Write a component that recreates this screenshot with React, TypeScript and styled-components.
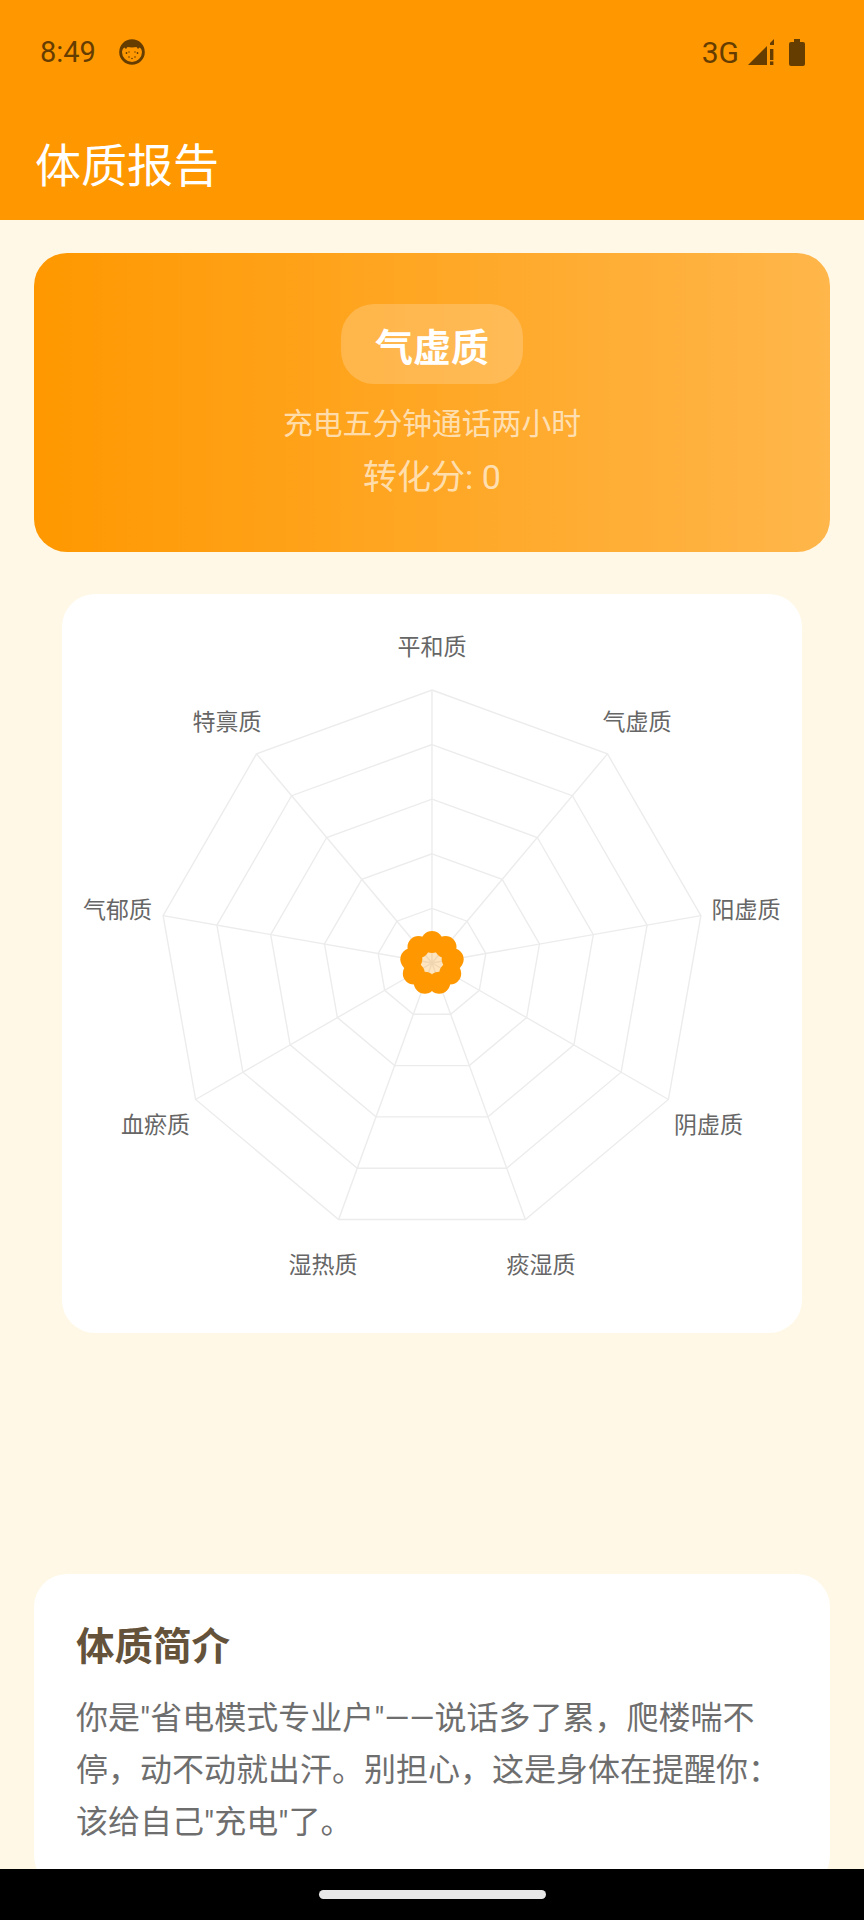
import React from 'react';
import styled, { createGlobalStyle } from 'styled-components';

const GlobalStyle = createGlobalStyle`
  html, body {
    margin: 0;
    padding: 0;
    background: #fff8e7;
    font-family: Roboto, "Noto Sans CJK SC", sans-serif;
  }
`

const Screen = styled.div`
  width: 864px;
  height: 1920px;
  display: flex;
  flex-direction: column;
  overflow: hidden;
  background: #fff8e7;
`

const Header = styled.header`
  flex: none;
  height: 220px;
  box-sizing: border-box;
  background: #ff9800;
  display: flex;
  flex-direction: column;
`

const StatusBar = styled.div`
  height: 104px;
  box-sizing: border-box;
  padding: 0 59px 0 40px;
  display: flex;
  align-items: center;
  justify-content: space-between;
  color: #663d00;
`

const StatusGroup = styled.div`
  display: flex;
  align-items: center;
`

const Clock = styled.span`
  font-size: 29px;
  width: 79px;
`

const Network = styled.span`
  font-size: 30px;
  font-weight: 400;
  margin-right: 9px;
`

const Battery = styled.svg`
  margin-left: 15px;
`

const Title = styled.h1`
  margin: 31px 0 0;
  padding-left: 35px;
  font-size: 46px;
  line-height: 62px;
  font-weight: 400;
  color: #fff;
`

const Content = styled.main`
  flex: 1;
  min-height: 0;
  overflow: hidden;
  padding: 33px 34px 0;
  display: flex;
  flex-direction: column;
`

const Hero = styled.section`
  flex: none;
  height: 299px;
  box-sizing: border-box;
  padding-top: 51px;
  border-radius: 33px;
  background: linear-gradient(90deg, #ff9800, #ffb64a);
  display: flex;
  flex-direction: column;
  align-items: center;
`

const Badge = styled.div`
  width: 182px;
  height: 80px;
  border-radius: 33px;
  background: rgba(255, 255, 255, 0.2);
  display: flex;
  align-items: center;
  justify-content: center;
  color: #fff;
  font-size: 38px;
  font-weight: 700;
`

const Slogan = styled.div`
  margin-top: 20px;
  font-size: 29.8px;
  line-height: 40px;
  color: rgba(255, 255, 255, 0.65);
`

const Score = styled.div`
  margin-top: 10px;
  font-size: 34px;
  line-height: 46px;
  color: rgba(255, 255, 255, 0.65);
`

const ChartCard = styled.section`
  flex: none;
  width: 740px;
  height: 739px;
  margin: 42px 0 0 28px;
  border-radius: 33px;
  background: #fff;
`

const ChartLabel = styled.text`
  font-size: 23px;
  fill: #666;
  text-anchor: middle;
  dominant-baseline: central;
`

const IntroCard = styled.section`
  flex: none;
  margin-top: 241px;
  padding: 47px 46px 40px 42px;
  border-radius: 33px;
  background: #fff;
`

const IntroTitle = styled.h2`
  margin: 0 0 19px;
  font-size: 38.5px;
  line-height: 52px;
  font-weight: 700;
  color: #64523a;
`

const IntroText = styled.p`
  margin: 0;
  font-size: 32px;
  line-height: 52.2px;
  color: #6e6e6e;
`

const NavBar = styled.div`
  flex: none;
  height: 51px;
  background: #000;
  display: flex;
  justify-content: center;
  padding-top: 21px;
  box-sizing: border-box;
`

const NavPill = styled.div`
  width: 227px;
  height: 9px;
  border-radius: 5px;
  background: #e8e8e8;
`

// chart centre inside the card
const CX = 370;
const CY = 369;
const RADIUS = 273;
const DATA_RADIUS = 21;

const labels = [
  { text: '平和质', x: 370, y: 53 },
  { text: '气虚质', x: 575, y: 128 },
  { text: '阳虚质', x: 684, y: 316 },
  { text: '阴虚质', x: 646.5, y: 531 },
  { text: '痰湿质', x: 479, y: 671 },
  { text: '湿热质', x: 261, y: 671 },
  { text: '血瘀质', x: 93.5, y: 531 },
  { text: '气郁质', x: 55.5, y: 316 },
  { text: '特禀质', x: 165, y: 128 },
];

const vertex = (i: number, r: number) => {
  const a = (i * 2 * Math.PI) / 9;
  return [CX + r * Math.sin(a), CY - r * Math.cos(a)];
};

const ring = (r: number) =>
  labels.map((_, i) => vertex(i, r).map(n => n.toFixed(1)).join(',')).join(' ');

const RadarChart = () => (
  <svg width="740" height="739" viewBox="0 0 740 739">
    {[0.2, 0.4, 0.6, 0.8, 1].map(f => (
      <polygon key={f} points={ring(RADIUS * f)} fill="none" stroke="#ececec" strokeWidth="1.4" />
    ))}
    {labels.map((l, i) => {
      const [x, y] = vertex(i, RADIUS);
      return <line key={l.text} x1={CX} y1={CY} x2={x} y2={y} stroke="#ececec" strokeWidth="1.4" />;
    })}
    <polygon points={ring(DATA_RADIUS)} fill="rgba(255, 152, 0, 0.25)" />
    {labels.map((l, i) => {
      const [x, y] = vertex(i, DATA_RADIUS);
      return <circle key={l.text} cx={x} cy={y} r="11" fill="#ff9800" />;
    })}
    {labels.map(l => (
      <ChartLabel key={l.text} x={l.x} y={l.y}>{l.text}</ChartLabel>
    ))}
  </svg>
);

const FaceIcon = () => (
  <svg width="26" height="26" viewBox="0 0 26 26">
    <circle cx="13" cy="13" r="11.4" fill="none" stroke="#663d00" strokeWidth="2.8" />
    <path d="M2.5 11 C3.5 4 9 1.5 13 1.5 C17 1.5 22.5 4 23.5 11 L20.5 8.5 L19 10 L17.5 8 C15 8.6 11 8.6 8.5 8 L7 10 L5.5 8.5 Z" fill="#663d00" />
    <circle cx="7.5" cy="14" r="0.9" fill="#663d00" />
    <circle cx="18.5" cy="14" r="0.9" fill="#663d00" />
    <circle cx="10" cy="13" r="0.7" fill="#663d00" />
    <circle cx="16" cy="13" r="0.7" fill="#663d00" />
    <circle cx="10" cy="18" r="0.8" fill="#663d00" />
    <circle cx="13" cy="19.5" r="0.8" fill="#663d00" />
    <circle cx="16" cy="18" r="0.8" fill="#663d00" />
  </svg>
);

const SignalIcon = () => (
  <svg width="26" height="26" viewBox="0 0 26 26" fill="#663d00">
    <path d="M0 26 L19 7 V26 Z" />
    <path d="M22 4 L26 0 V6 H22 Z" />
    <rect x="22" y="10" width="3.4" height="11" />
    <rect x="22" y="22.4" width="3.4" height="3.6" />
  </svg>
);

const BatteryIcon = () => (
  <Battery width="16" height="27" viewBox="0 0 16 27" fill="#663d00">
    <path d="M5 0 H11 V3 H14 Q16 3 16 5 V25 Q16 27 14 27 H2 Q0 27 0 25 V5 Q0 3 2 3 H5 Z" />
  </Battery>
);

export default function App() {
  return (
    <Screen>
      <GlobalStyle />
      <Header>
        <StatusBar>
          <StatusGroup>
            <Clock>8:49</Clock>
            <FaceIcon />
          </StatusGroup>
          <StatusGroup>
            <Network>3G</Network>
            <SignalIcon />
            <BatteryIcon />
          </StatusGroup>
        </StatusBar>
        <Title>体质报告</Title>
      </Header>
      <Content>
        <Hero>
          <Badge>气虚质</Badge>
          <Slogan>充电五分钟通话两小时</Slogan>
          <Score>转化分: 0</Score>
        </Hero>
        <ChartCard>
          <RadarChart />
        </ChartCard>
        <IntroCard>
          <IntroTitle>体质简介</IntroTitle>
          <IntroText>你是"省电模式专业户"——说话多了累，爬楼喘不停，动不动就出汗。别担心，这是身体在提醒你：该给自己"充电"了。</IntroText>
        </IntroCard>
      </Content>
      <NavBar>
        <NavPill />
      </NavBar>
    </Screen>
  );
}
